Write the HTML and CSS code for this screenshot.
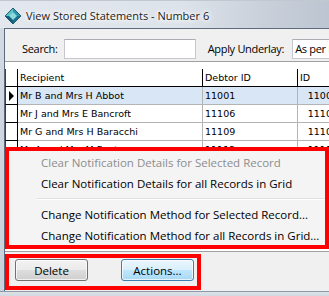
FILE: index.html
```html
<!DOCTYPE html>
<html lang="en">
<head>
    <meta charset="UTF-8">
    <title>View Stored Statements - Number 6</title>
    <link rel="stylesheet" href="styles.css">
</head>
<body>
    <div class="window">
        <div class="titlebar">
            <svg class="app-icon" width="16" height="16" viewBox="0 0 16 16">
                <polygon points="8,0 16,8 8,16 0,8" fill="#1d6f8c"/>
                <polygon points="8,0 8,8 0,8" fill="#5cc2c8"/>
                <polygon points="8,0 16,8 8,8" fill="#2f93ab"/>
                <polygon points="0,8 8,8 8,16" fill="#13607e"/>
                <polygon points="8,4 12,8 8,12 4,8" fill="#8ad9dc"/>
                <polygon points="8,0 16,8 8,16 0,8" fill="none" stroke="#0f4a63" stroke-width="0.8"/>
            </svg>
            <span class="title">View Stored Statements - Number 6</span>
        </div>

        <div class="client">
            <div class="toolbar">
                <span class="label">Search:</span>
                <div class="textbox"></div>
                <span class="label underlay">Apply Underlay:</span>
                <div class="combo">As per Debtor</div>
            </div>

            <div class="grid">
                <div class="grid-top"></div>
                <div class="row head">
                    <div class="ind"></div>
                    <div class="cell recipient">Recipient</div>
                    <div class="cell debtor">Debtor ID</div>
                    <div class="cell id">ID</div>
                </div>
                <div class="row selected">
                    <div class="ind"><span class="arrow"></span></div>
                    <div class="cell recipient">Mr B and Mrs H Abbot</div>
                    <div class="cell debtor">11001</div>
                    <div class="cell id num">11001</div>
                </div>
                <div class="row">
                    <div class="ind"></div>
                    <div class="cell recipient">Mr J and Mrs E Bancroft</div>
                    <div class="cell debtor">11106</div>
                    <div class="cell id num">11106</div>
                </div>
                <div class="row">
                    <div class="ind"></div>
                    <div class="cell recipient">Mr G and Mrs H Baracchi</div>
                    <div class="cell debtor">11109</div>
                    <div class="cell id num">11109</div>
                </div>
                <div class="row">
                    <div class="ind"></div>
                    <div class="cell recipient">Mr A and Mrs M Bastowe</div>
                    <div class="cell debtor">11112</div>
                    <div class="cell id num">11112</div>
                </div>
            </div>

            <div class="footer">
                <button class="btn">Delete</button>
                <button class="btn default">Actions...</button>
            </div>
        </div>
        <div class="frame-bottom"></div>

        <!-- context menu opened from Actions... -->
        <ul class="menu">
            <li class="disabled">Clear Notification Details for Selected Record</li>
            <li>Clear Notification Details for all Records in Grid</li>
            <li class="sep"></li>
            <li>Change Notification Method for Selected Record...</li>
            <li>Change Notification Method for all Records in Grid...</li>
        </ul>
        <div class="mark-buttons"></div>
    </div>
</body>
</html>
```

FILE: styles.css
```css
body {
    margin: 0;
    background: #ffffff;
}

.window {
    position: relative;
    width: 329px;
    height: 296px;
    overflow: hidden;
    background: linear-gradient(to bottom, #d4dae2, #c9d1dc);
    font-family: 'Open Sans', sans-serif;
}

/* Aero title bar */
.titlebar {
    height: 28px;
    display: flex;
    align-items: center;
    padding-left: 5px;
    padding-top: 2px;
    box-sizing: border-box;
    background: linear-gradient(to right, #e3e8ee 0%, #dde3ea 55%, #c9d0da 80%, #bcc5d1 100%);
    border-top: 1px solid #c2c8d0;
}

.app-icon {
    flex: none;
}

.title {
    margin-left: 5px;
    font-size: 11px;
    color: #1b1b1b;
    white-space: nowrap;
    text-shadow: 0 0 6px #ffffff, 0 0 6px #ffffff, 0 0 3px #ffffff;
}

.client {
    margin-left: 4px;
    height: 262px;
    border-top: 1px solid #5d6b7c;
    border-left: 1px solid #5d6b7c;
    background: #f0f0f0;
    display: flex;
    flex-direction: column;
}

.toolbar {
    height: 32px;
    flex: none;
    display: flex;
    align-items: flex-start;
    padding: 10px 0 0 17px;
    box-sizing: border-box;
    font-size: 11px;
    letter-spacing: -0.3px;
    color: #000;
}

.label {
    flex: none;
    line-height: 20px;
    white-space: nowrap;
}

.textbox {
    flex: none;
    width: 132px;
    height: 20px;
    box-sizing: border-box;
    margin-left: 6px;
    background: #fff;
    border: 1px solid #c5c9cf;
    border-top-color: #abadb3;
}

.underlay {
    margin-left: 12px;
}

.combo {
    margin-left: 8px;
    width: 90px;
    flex: none;
    height: 20px;
    line-height: 18px;
    box-sizing: border-box;
    padding-left: 2px;
    background: #fff;
    border: 1px solid #c5c9cf;
    border-top-color: #abadb3;
    white-space: nowrap;
}

/* data grid */
.grid {
    height: 191px;
    flex: none;
    background: #fff;
    border-top: 1px solid #a0a0a0;
    border-bottom: 1px solid #a0a0a0;
    box-sizing: border-box;
    font-family: 'DejaVu Sans', sans-serif;
    font-size: 9.5px;
    color: #000;
}

.grid-top {
    height: 7px;
}

.row {
    display: flex;
    height: 18px;
    width: 360px;
}

.ind {
    width: 13px;
    flex: none;
    box-sizing: border-box;
    border-left: 1px solid #404040;
    border-right: 1px solid #000;
    border-bottom: 1px solid #000;
    position: relative;
}

.cell {
    flex: none;
    box-sizing: border-box;
    line-height: 17px;
    padding-left: 2px;
    border-right: 1px solid #b4b4b4;
    border-bottom: 1px solid #b4b4b4;
    white-space: nowrap;
    overflow: hidden;
}

.recipient { width: 185px; }
.debtor { width: 95px; }
.id { width: 50px; }

.num {
    text-align: right;
    padding-right: 9px;
}

.head .cell {
    border-right-color: #000;
    border-bottom-color: #000;
}

.selected .cell {
    background: #d8e6f6;
}

.arrow {
    position: absolute;
    left: 3px;
    top: 4px;
    border-left: 5px solid #000;
    border-top: 5px solid transparent;
    border-bottom: 5px solid transparent;
}

.footer {
    height: 38px;
    flex: none;
    display: flex;
    gap: 33px;
    padding: 7px 0 0 10px;
    box-sizing: border-box;
}

.btn {
    width: 73px;
    height: 22px;
    padding: 0;
    font-family: 'Open Sans', sans-serif;
    font-size: 11.5px;
    color: #000;
    border: 1px solid #707070;
    border-radius: 3px;
    background: linear-gradient(to bottom, #f2f2f2 0%, #ebebeb 48%, #dddddd 52%, #cfcfcf 100%);
    box-shadow: inset 0 0 0 1px rgba(255, 255, 255, 0.7);
}

.btn.default {
    border-color: #3c7fb1;
    background: linear-gradient(to bottom, #eaf6fd 0%, #d9f0fc 48%, #bee6fd 52%, #a7d9f5 100%);
}

.frame-bottom {
    height: 6px;
    border-top: 1px solid #8d99a8;
    background: linear-gradient(to bottom, #dde2e8, #cdd4dd);
}

/* popup menu, highlighted */
.menu {
    position: absolute;
    left: 5px;
    top: 147px;
    width: 324px;
    height: 102px;
    box-sizing: border-box;
    margin: 0;
    padding: 1px 0 0;
    list-style: none;
    border: 4px solid #ff0000;
    background: #f4f4f4;
    font-size: 11.5px;
    color: #000;
}

.menu li {
    height: 21px;
    line-height: 22px;
    padding-left: 32px;
    white-space: nowrap;
}

.menu li.disabled {
    color: #8d8d8d;
}

.menu li.sep {
    height: 10px;
    margin-left: 28px;
    padding: 0;
    background: linear-gradient(to bottom, transparent 4px, #e0e0e0 4px, #e0e0e0 5px, #ffffff 5px, #ffffff 6px, transparent 6px);
}

.mark-buttons {
    position: absolute;
    left: 5px;
    top: 254px;
    width: 196px;
    height: 36px;
    box-sizing: border-box;
    border: 4px solid #ff0000;
}
```
